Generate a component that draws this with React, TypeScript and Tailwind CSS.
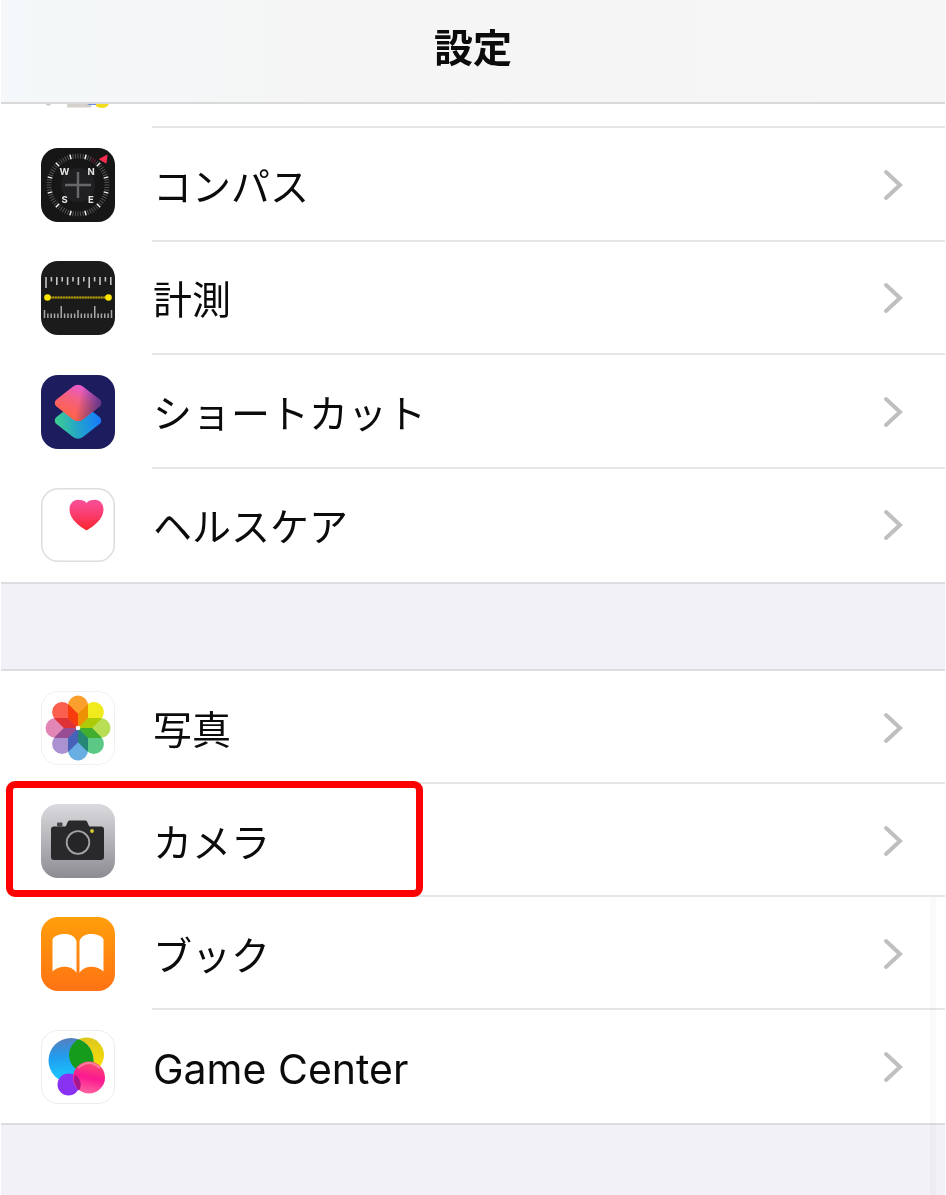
import type { ReactNode } from "react";

type Item = { label: string; icon: ReactNode; latin?: boolean; highlighted?: boolean };

const range = (n: number) => Array.from({ length: n }, (_, i) => i);

function IconFrame({ children }: { children: ReactNode }) {
  return (
    <svg viewBox="0 0 74 74" className="size-[74px] shrink-0" aria-hidden="true">
      {children}
    </svg>
  );
}

function CompassIcon() {
  return (
    <IconFrame>
      <rect width="74" height="74" rx="17" fill="#161617" />
      <circle cx="37" cy="37" r="17" fill="#202022" />
      {range(72).map((i) => {
        const angle = i * 5 + 15;
        const major = i % 6 === 0;
        const red = angle === 30 || angle === 35;
        return (
          <line
            key={i}
            x1="37"
            x2="37"
            y1="5.6"
            y2="10.4"
            stroke={red ? "#8d1f38" : major ? "#f4f4f4" : "#626264"}
            strokeWidth={major ? 1.5 : 0.8}
            transform={`rotate(${angle} 37 37)`}
          />
        );
      })}
      <path d="M37 24v26M24 37h26" stroke="#68686a" strokeWidth="2.4" />
      <path d="M58.5 11.2 66 7.2 65 15Z" fill="#ff2d4f" stroke="#ff2d4f" strokeLinejoin="round" />
      <g fill="#e4e4e4" fontFamily="Inter, sans-serif" fontSize="9.5" fontWeight="700" textAnchor="middle">
        <text x="23.5" y="26.5">W</text>
        <text x="50" y="26.5">N</text>
        <text x="23.5" y="54.5">S</text>
        <text x="50" y="54.5">E</text>
      </g>
    </IconFrame>
  );
}

function MeasureIcon() {
  return (
    <IconFrame>
      <rect width="74" height="74" rx="17" fill="#1b1b1c" />
      <g stroke="#c4c4c4" strokeWidth="1.6">
        {range(13).map((i) => (
          <line key={i} x1={5 + i * 5.4} x2={5 + i * 5.4} y1="16" y2={i === 0 || i === 8 ? 27 : i % 2 ? 20.5 : 24} />
        ))}
      </g>
      <g stroke="#a9a9a9" strokeWidth="1.5">
        {range(21).map((i) => (
          <line
            key={i}
            x1={3.5 + i * 3.35}
            x2={3.5 + i * 3.35}
            y1={i === 5 || i === 15 ? 45 : i % 10 === 0 ? 49 : 52.5}
            y2="57"
          />
        ))}
      </g>
      <path d="M6 36.5h61" stroke="#716414" strokeWidth="2" />
      <path d="M6 36.5h61" stroke="#b79b08" strokeWidth="2" strokeDasharray="1.5 1.2" />
      <circle cx="6.5" cy="36.5" r="3.3" fill="#ffe600" />
      <circle cx="67.5" cy="36.5" r="3.3" fill="#ffe600" />
    </IconFrame>
  );
}

function ShortcutsIcon() {
  return (
    <IconFrame>
      <defs>
        <linearGradient id="sc-low" x1="0.1" y1="1" x2=".9" y2="0">
          <stop offset="0" stopColor="#3fcf8e" />
          <stop offset=".5" stopColor="#22a3cc" />
          <stop offset="1" stopColor="#1479ff" />
        </linearGradient>
        <linearGradient id="sc-top" x1=".2" y1="0" x2=".5" y2="1">
          <stop offset="0" stopColor="#e65bd0" />
          <stop offset=".5" stopColor="#f5607c" />
          <stop offset="1" stopColor="#ff624d" />
        </linearGradient>
        <linearGradient id="sc-shade" x1=".5" y1=".5" x2="1" y2=".15">
          <stop offset="0" stopColor="#3c2a80" stopOpacity="0" />
          <stop offset="1" stopColor="#3c2a80" stopOpacity=".8" />
        </linearGradient>
      </defs>
      <rect width="74" height="74" rx="17" fill="#1c1c5e" />
      <g transform="translate(37 45.5) scale(1 .78) rotate(45)">
        <rect x="-18.5" y="-18.5" width="37" height="37" rx="7" fill="url(#sc-low)" />
      </g>
      <g transform="translate(37 28) scale(1 .78) rotate(45)">
        <rect x="-18.5" y="-18.5" width="37" height="37" rx="7" fill="url(#sc-top)" />
        <rect x="-18.5" y="-18.5" width="37" height="37" rx="7" fill="url(#sc-shade)" />
      </g>
    </IconFrame>
  );
}

function HealthIcon() {
  return (
    <IconFrame>
      <defs>
        <linearGradient id="heart" x1="0" y1="0" x2="0" y2="1">
          <stop offset="0" stopColor="#f9509b" />
          <stop offset=".5" stopColor="#fa3c6b" />
          <stop offset="1" stopColor="#f9252b" />
        </linearGradient>
      </defs>
      <rect x=".75" y=".75" width="72.5" height="72.5" rx="16.5" fill="#fff" stroke="#dedede" strokeWidth="1.5" />
      <path
        d="M45.5 42.5C39 38.5 28.5 31.5 28.5 21.5c0-5.5 3.7-9.7 8.500-9.700 3.700 0 7 1.200 8.500 3.200 1.500-2 4.800-3.200 8.500-3.200 4.800 0 8.500 4.200 8.500 9.700 0 10-10.500 17-17 21Z"
        fill="url(#heart)"
      />
    </IconFrame>
  );
}

const petals = ["#fb9f2d", "#f1ea1c", "#b8de55", "#5bc886", "#68aee3", "#aa91d0", "#e286b6", "#fb5f4d"];

function PhotosIcon() {
  return (
    <IconFrame>
      <rect x=".5" y=".5" width="73" height="73" rx="16.5" fill="#fff" stroke="#f0f0f0" />
      <g className="isolate">
        {petals.map((color, i) => (
          <path
            key={color}
            d="M27 14.5a10 10 0 0 1 20 0V27L37 37 27 27Z"
            fill={color}
            className="mix-blend-multiply"
            transform={`rotate(${i * 45} 37 37)`}
          />
        ))}
      </g>
      <circle cx="37" cy="37" r="2.3" fill="#fff" />
    </IconFrame>
  );
}

function CameraIcon() {
  return (
    <IconFrame>
      <defs>
        <linearGradient id="camera-bg" x1="0" y1="0" x2="0" y2="1">
          <stop offset="0" stopColor="#dbdade" />
          <stop offset="1" stopColor="#8d8c93" />
        </linearGradient>
      </defs>
      <rect width="74" height="74" rx="17" fill="url(#camera-bg)" />
      <rect x="16" y="18.5" width="5.5" height="4" rx="1" fill="#47474a" />
      <path
        d="M13 22.5h11c2 0 2-6 4.500-6h16c2.500 0 2.500 6 4.500 6h11q3 0 3 3v27.500q0 3-3 3H13q-3 0-3-3V25.500q0-3 3-3Z"
        fill="#29292b"
      />
      <circle cx="37" cy="38.5" r="11.3" fill="#252527" stroke="#a3a3a6" strokeWidth="1.8" />
      <circle cx="51" cy="27" r="1.9" fill="#d7cc2c" />
    </IconFrame>
  );
}

function BooksIcon() {
  return (
    <IconFrame>
      <defs>
        <linearGradient id="books-bg" x1="0" y1="0" x2="0" y2="1">
          <stop offset="0" stopColor="#ff9f0a" />
          <stop offset="1" stopColor="#ff7214" />
        </linearGradient>
      </defs>
      <rect width="74" height="74" rx="17" fill="url(#books-bg)" />
      <path
        d="M11.5 22.5C13 18.5 19 17 24 17s11 2.5 11.5 8v31C31 48 18 48 11.5 54.5ZM38.5 25C39 19.5 45 17 50 17s11 1.500 12.500 5.500v32C56 48 43 48 38.500 56Z"
        fill="#fff"
      />
    </IconFrame>
  );
}

function GameCenterIcon() {
  return (
    <IconFrame>
      <defs>
        <linearGradient id="gc-blue" x1=".4" y1="0" x2=".5" y2="1">
          <stop offset="0" stopColor="#557fbd" />
          <stop offset=".4" stopColor="#229df0" />
          <stop offset="1" stopColor="#16d0ff" />
        </linearGradient>
        <linearGradient id="gc-yellow" x1="0" y1="0" x2="0" y2="1">
          <stop offset="0" stopColor="#dcc820" />
          <stop offset="1" stopColor="#ffe000" />
        </linearGradient>
        <linearGradient id="gc-pink" x1=".6" y1="0" x2=".4" y2="1">
          <stop offset="0" stopColor="#f9516f" />
          <stop offset=".5" stopColor="#fb1890" />
          <stop offset="1" stopColor="#ff65a1" />
        </linearGradient>
        <clipPath id="gc-clip">
          <circle cx="30" cy="30.5" r="22.5" />
        </clipPath>
      </defs>
      <rect x=".5" y=".5" width="73" height="73" rx="16.5" fill="#fff" stroke="#ececec" />
      <circle cx="45.5" cy="25" r="17.5" fill="url(#gc-yellow)" />
      <circle cx="30" cy="30.5" r="22.5" fill="url(#gc-blue)" />
      <circle cx="45.5" cy="25" r="17.5" fill="#169c1c" clipPath="url(#gc-clip)" />
      <circle cx="27.5" cy="54.5" r="11" fill="#8a32f2" />
      <circle cx="48" cy="47.5" r="16" fill="url(#gc-pink)" />
      <path d="M33 52q3 7 5 8.500a11 11 0 0 0-4-15.500q-1.500 3-1 7Z" fill="#a9168b" />
      <path d="M37 38q11-10 22 0" fill="none" stroke="#fff" strokeOpacity=".3" strokeWidth="2" />
    </IconFrame>
  );
}

function Chevron() {
  return (
    <svg viewBox="0 0 20 32" className="h-8 w-5 shrink-0" fill="none" aria-hidden="true">
      <path d="M3 3 17 16 3 29" stroke="#bfbfc1" strokeWidth="4" strokeLinecap="round" strokeLinejoin="miter" />
    </svg>
  );
}

function Row({ label, icon, latin = false, highlighted = false }: Item) {
  return (
    <li className="group relative flex flex-1">
      <a href="#" className="flex w-full items-stretch pl-10">
        <span className="flex items-center">{icon}</span>
        <span className="ml-[37px] flex flex-1 items-center justify-between border-b-2 border-[#e6e6e8] pr-[42px] pl-px pt-0.5 group-last:border-transparent">
          <span className={latin ? "pt-1 text-[41px] leading-12" : "pt-1 text-[39px] leading-12"}>{label}</span>
          <Chevron />
        </span>
      </a>
      {highlighted && (
        <span className="pointer-events-none absolute -top-[3px] left-[5px] h-[116px] w-[417px] rounded-[9px] border-[7px] border-[#ff0000]" />
      )}
    </li>
  );
}

const systemApps: Item[] = [
  { label: "コンパス", icon: <CompassIcon /> },
  { label: "計測", icon: <MeasureIcon /> },
  { label: "ショートカット", icon: <ShortcutsIcon /> },
  { label: "ヘルスケア", icon: <HealthIcon /> },
];

const mediaApps: Item[] = [
  { label: "写真", icon: <PhotosIcon /> },
  { label: "カメラ", icon: <CameraIcon />, highlighted: true },
  { label: "ブック", icon: <BooksIcon /> },
  { label: "Game Center", icon: <GameCenterIcon />, latin: true },
];

export default function App() {
  return (
    <div className="relative flex min-h-screen flex-col bg-white px-px font-['Inter','Noto_Sans_CJK_JP',sans-serif] text-[#0b0b0b]">
      <header className="flex h-[104px] items-center justify-center border-b-2 border-[#d9d9da] bg-linear-to-r from-[#f4f8fa] via-[#f5f5f5] via-35% to-[#f5f6f5] pb-1.5">
        <h1 className="text-[39px] leading-12 font-bold">設定</h1>
      </header>
      <main className="flex flex-1 flex-col bg-[#f2f1f7]">
        <div className="flex h-6 bg-white pl-10">
          <svg viewBox="0 0 74 6" className="h-1.5 w-[74px] shrink-0" aria-hidden="true">
            <path d="M5 0h5l-1 1.500H6Z" fill="#cfc5c5" />
            <path d="M26 0h25l-1 3.500H26Z" fill="#d4d1cb" />
            <path d="M46 0h12v1H48Z" fill="#6a8bd8" />
            <path d="M55 0h13q-2 4-7 4-4 0-6-2Z" fill="#f2dc1d" />
          </svg>
          <div className="ml-[37px] flex-1 border-b-2 border-[#e6e6e8]" />
        </div>
        <ul className="flex min-h-[456px] flex-col border-b-2 border-[#dddce1] bg-white">
          {systemApps.map((item) => (
            <Row key={item.label} {...item} />
          ))}
        </ul>
        <ul className="mt-[85px] flex min-h-[456px] flex-col border-y-2 border-[#dddce1] bg-white">
          {mediaApps.map((item) => (
            <Row key={item.label} {...item} />
          ))}
        </ul>
      </main>
      <div className="pointer-events-none absolute right-2.5 bottom-0 h-[298px] w-1.5 bg-black/2" />
    </div>
  );
}
